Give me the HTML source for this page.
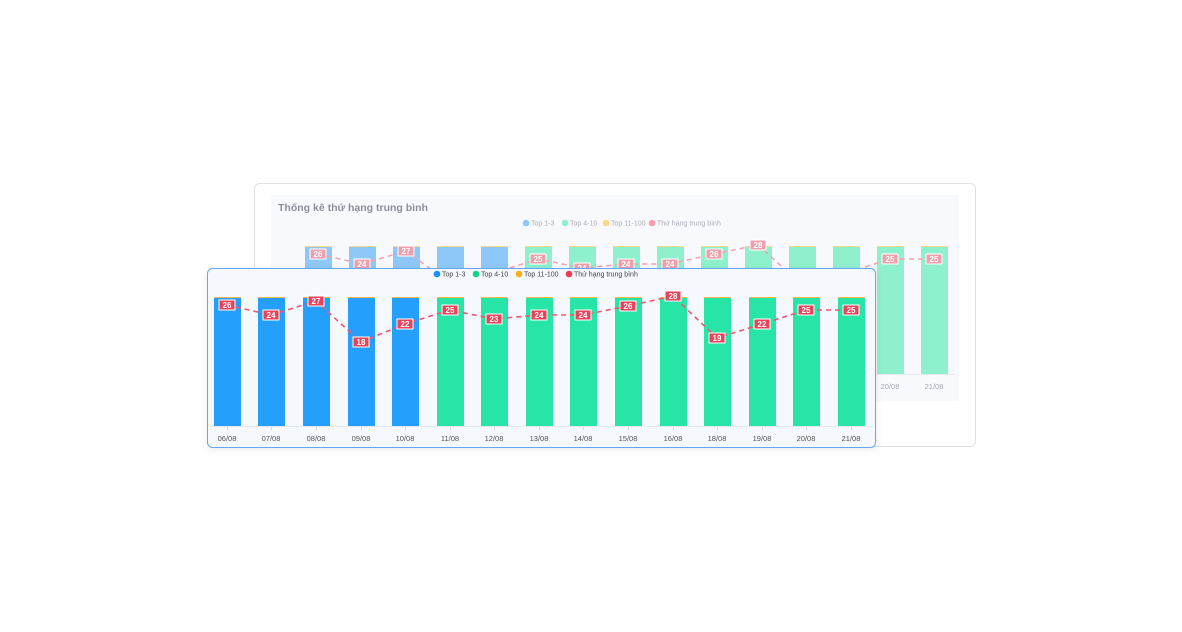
<!DOCTYPE html>
<html><head><meta charset="utf-8"><style>
html,body{margin:0;padding:0;background:#fff;}
body{width:1182px;height:632px;overflow:hidden;position:relative;font-family:"Liberation Sans",sans-serif;}
svg{position:absolute;left:0;top:0;}
</style></head><body>
<svg width="1182" height="632" viewBox="0 0 1182 632" font-family="Liberation Sans, sans-serif">
<defs>
<filter id="sh" x="-5%" y="-10%" width="110%" height="130%"><feDropShadow dx="0" dy="2" stdDeviation="4" flood-color="#000" flood-opacity="0.08"/></filter>
</defs>
<!-- back card -->
<rect x="254.5" y="183.5" width="721" height="263" rx="5" fill="#fff" stroke="#e2e2e2"/>
<rect x="271" y="195" width="688" height="206" fill="#f8f9fc"/>
<text x="278" y="211" font-size="10.5" font-weight="bold" fill="#8a8f99">Thống kê thứ hạng trung bình</text>
<g font-size="7" fill="#a9adb5">
<circle cx="526" cy="223" r="3.3" fill="#8ec8f8"/><text x="531" y="225.5">Top 1-3</text>
<circle cx="565" cy="223" r="3.3" fill="#8ef0cc"/><text x="570" y="225.5">Top 4-10</text>
<circle cx="606" cy="223" r="3.3" fill="#fcd88a"/><text x="611" y="225.5">Top 11-100</text>
<circle cx="652" cy="223" r="3.3" fill="#f7a0aa"/><text x="657" y="225.5">Thứ hạng trung bình</text>
</g>
<g id="backbars">
<g fill="#8ec8f8">
<rect x="305" y="246" width="27" height="128"/><rect x="349" y="246" width="27" height="128"/><rect x="393" y="246" width="27" height="128"/><rect x="437" y="246" width="27" height="128"/><rect x="481" y="246" width="27" height="128"/>
</g>
<g fill="#8ef0cc">
<rect x="525" y="246" width="27" height="128"/><rect x="569" y="246" width="27" height="128"/><rect x="613" y="246" width="27" height="128"/><rect x="657" y="246" width="27" height="128"/><rect x="701" y="246" width="27" height="128"/><rect x="745" y="246" width="27" height="128"/><rect x="789" y="246" width="27" height="128"/><rect x="833" y="246" width="27" height="128"/><rect x="877" y="246" width="27" height="128"/><rect x="921" y="246" width="27" height="128"/>
</g>
<g fill="#fcd88a">
<rect x="305" y="246" width="27" height="1"/><rect x="349" y="246" width="27" height="1"/><rect x="393" y="246" width="27" height="1"/><rect x="437" y="246" width="27" height="1"/><rect x="481" y="246" width="27" height="1"/><rect x="525" y="246" width="27" height="1"/><rect x="569" y="246" width="27" height="1"/><rect x="613" y="246" width="27" height="1"/><rect x="657" y="246" width="27" height="1"/><rect x="701" y="246" width="27" height="1"/><rect x="745" y="246" width="27" height="1"/><rect x="789" y="246" width="27" height="1"/><rect x="833" y="246" width="27" height="1"/><rect x="877" y="246" width="27" height="1"/><rect x="921" y="246" width="27" height="1"/>
</g>
</g>
<line x1="298" y1="374.5" x2="955" y2="374.5" stroke="#e8eaee"/>
<polyline points="318,254 362,264 406,251 450,283 494,273 538,259 582,268 626,264 670,264 714,254 758,245 802,285 846,273 890,259 934,259" fill="none" stroke="#f4a0ae" stroke-width="1.5" stroke-dasharray="5,4"/>
<g font-size="8" font-weight="bold" fill="#fff" text-anchor="middle">
<g fill="#f0a0ac" stroke="#fff" stroke-width="1">
<rect x="310" y="249" width="16" height="10"/><rect x="354" y="259" width="16" height="10"/><rect x="398" y="246" width="16" height="10"/><rect x="530" y="254" width="16" height="10"/><rect x="574" y="263" width="16" height="10"/><rect x="618" y="259" width="16" height="10"/><rect x="662" y="259" width="16" height="10"/><rect x="706" y="249" width="16" height="10"/><rect x="750" y="240" width="16" height="10"/><rect x="882" y="254" width="16" height="10"/><rect x="926" y="254" width="16" height="10"/>
</g>
<text x="318" y="257">26</text><text x="362" y="267">24</text><text x="406" y="254">27</text><text x="538" y="262">25</text><text x="582" y="271">24</text><text x="626" y="267">24</text><text x="670" y="267">24</text><text x="714" y="257">26</text><text x="758" y="248">28</text><text x="890" y="262">25</text><text x="934" y="262">25</text>
</g>
<g font-size="7.5" fill="#a3a7af" text-anchor="middle"><text x="890" y="389">20/08</text><text x="934" y="389">21/08</text></g>

<!-- front card -->
<rect x="207.5" y="268.5" width="668" height="179" rx="5" fill="#f5f8fc" stroke="#63a6f4" filter="url(#sh)"/>
<g font-size="7" fill="#444">
<circle cx="437" cy="274" r="3.3" fill="#1890ff"/><text x="442" y="276.5">Top 1-3</text>
<circle cx="476" cy="274" r="3.3" fill="#13d18c"/><text x="481" y="276.5">Top 4-10</text>
<circle cx="519" cy="274" r="3.3" fill="#faad14"/><text x="524" y="276.5">Top 11-100</text>
<circle cx="569" cy="274" r="3.3" fill="#f5394f"/><text x="574" y="276.5">Thứ hạng trung bình</text>
</g>
<g fill="#259ffc">
<rect x="214" y="297" width="27" height="129"/><rect x="258" y="297" width="27" height="129"/><rect x="303" y="297" width="27" height="129"/><rect x="348" y="297" width="27" height="129"/><rect x="392" y="297" width="27" height="129"/>
</g>
<g fill="#26e5a6">
<rect x="437" y="297" width="27" height="129"/><rect x="481" y="297" width="27" height="129"/><rect x="526" y="297" width="27" height="129"/><rect x="570" y="297" width="27" height="129"/><rect x="615" y="297" width="27" height="129"/><rect x="660" y="297" width="27" height="129"/><rect x="704" y="297" width="27" height="129"/><rect x="749" y="297" width="27" height="129"/><rect x="793" y="297" width="27" height="129"/><rect x="838" y="297" width="27" height="129"/>
</g>
<g fill="#fbb64a">
<rect x="214" y="297" width="27" height="1"/><rect x="258" y="297" width="27" height="1"/><rect x="303" y="297" width="27" height="1"/><rect x="348" y="297" width="27" height="1"/><rect x="392" y="297" width="27" height="1"/><rect x="437" y="297" width="27" height="1"/><rect x="481" y="297" width="27" height="1"/><rect x="526" y="297" width="27" height="1"/><rect x="570" y="297" width="27" height="1"/><rect x="615" y="297" width="27" height="1"/><rect x="660" y="297" width="27" height="1"/><rect x="704" y="297" width="27" height="1"/><rect x="749" y="297" width="27" height="1"/><rect x="793" y="297" width="27" height="1"/><rect x="838" y="297" width="27" height="1"/>
</g>
<line x1="209" y1="426.5" x2="873" y2="426.5" stroke="#e3e6ea"/>
<polyline points="227,305 271,315 316,301 361,342 405,324 450,310 494,319 539,315 583,315 628,306 673,296 717,338 762,324 806,310 851,310" fill="none" stroke="#f0576c" stroke-width="1.6" stroke-dasharray="5,4"/>
<g fill="#e8435a" stroke="#fff" stroke-width="1">
<rect x="219" y="300" width="16" height="10"/><rect x="263" y="310" width="16" height="10"/><rect x="308" y="296" width="16" height="10"/><rect x="353" y="337" width="16" height="10"/><rect x="397" y="319" width="16" height="10"/><rect x="442" y="305" width="16" height="10"/><rect x="486" y="314" width="16" height="10"/><rect x="531" y="310" width="16" height="10"/><rect x="575" y="310" width="16" height="10"/><rect x="620" y="301" width="16" height="10"/><rect x="665" y="291" width="16" height="10"/><rect x="709" y="333" width="16" height="10"/><rect x="754" y="319" width="16" height="10"/><rect x="798" y="305" width="16" height="10"/><rect x="843" y="305" width="16" height="10"/>
</g>
<g font-size="8" font-weight="bold" fill="#fff" text-anchor="middle">
<text x="227" y="308">26</text><text x="271" y="318">24</text><text x="316" y="304">27</text><text x="361" y="345">18</text><text x="405" y="327">22</text><text x="450" y="313">25</text><text x="494" y="322">23</text><text x="539" y="318">24</text><text x="583" y="318">24</text><text x="628" y="309">26</text><text x="673" y="299">28</text><text x="717" y="341">19</text><text x="762" y="327">22</text><text x="806" y="313">25</text><text x="851" y="313">25</text>
</g>
<g stroke="#d8dbe0"><line x1="227.5" y1="427" x2="227.5" y2="430"/><line x1="271.5" y1="427" x2="271.5" y2="430"/><line x1="316.5" y1="427" x2="316.5" y2="430"/><line x1="361.5" y1="427" x2="361.5" y2="430"/><line x1="405.5" y1="427" x2="405.5" y2="430"/><line x1="450.5" y1="427" x2="450.5" y2="430"/><line x1="494.5" y1="427" x2="494.5" y2="430"/><line x1="539.5" y1="427" x2="539.5" y2="430"/><line x1="583.5" y1="427" x2="583.5" y2="430"/><line x1="628.5" y1="427" x2="628.5" y2="430"/><line x1="673.5" y1="427" x2="673.5" y2="430"/><line x1="717.5" y1="427" x2="717.5" y2="430"/><line x1="762.5" y1="427" x2="762.5" y2="430"/><line x1="806.5" y1="427" x2="806.5" y2="430"/><line x1="851.5" y1="427" x2="851.5" y2="430"/></g>
<g font-size="7.5" fill="#555" text-anchor="middle">
<text x="227" y="441">06/08</text><text x="271" y="441">07/08</text><text x="316" y="441">08/08</text><text x="361" y="441">09/08</text><text x="405" y="441">10/08</text><text x="450" y="441">11/08</text><text x="494" y="441">12/08</text><text x="539" y="441">13/08</text><text x="583" y="441">14/08</text><text x="628" y="441">15/08</text><text x="673" y="441">16/08</text><text x="717" y="441">18/08</text><text x="762" y="441">19/08</text><text x="806" y="441">20/08</text><text x="851" y="441">21/08</text>
</g>
</svg>
</body></html>
